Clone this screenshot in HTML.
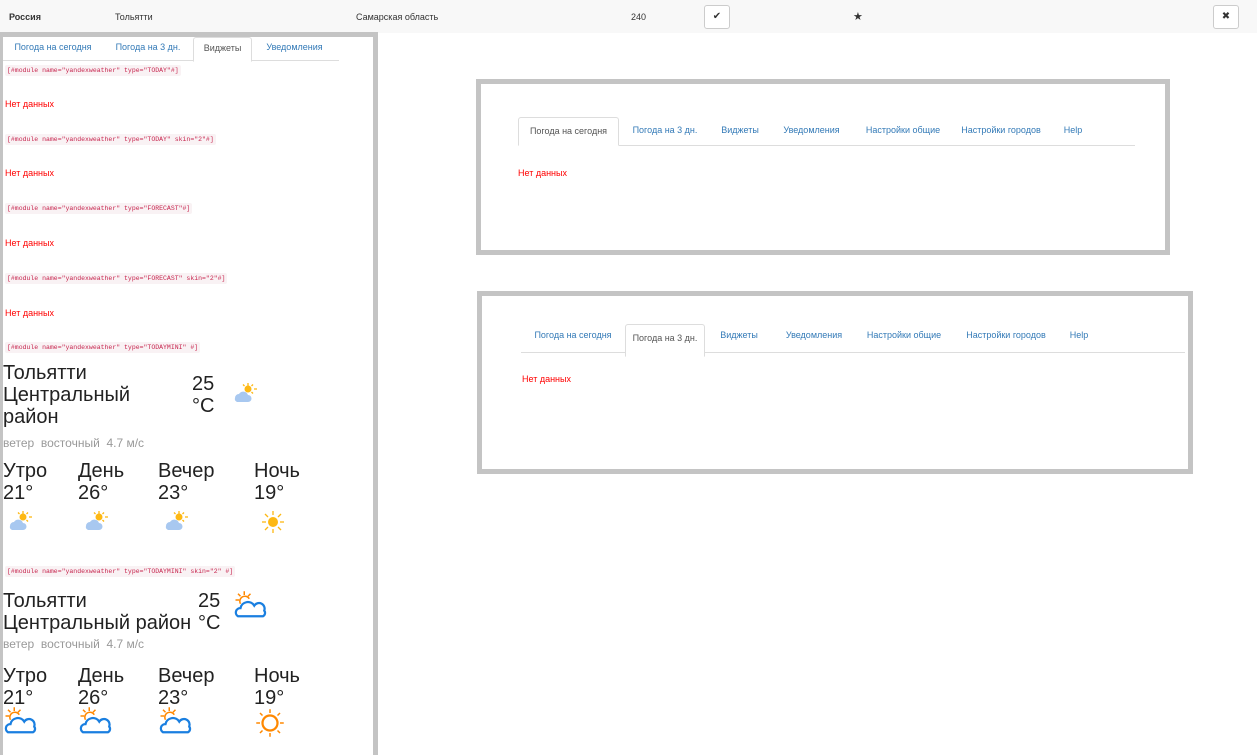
<!DOCTYPE html>
<html><head><meta charset="utf-8"><style>
*{margin:0;padding:0;box-sizing:border-box}
body{width:1257px;height:755px;overflow:hidden;background:#fff;font-family:"Liberation Sans",sans-serif;position:relative;color:#333}
.a{position:absolute;white-space:nowrap}
.top{position:absolute;left:0;top:0;width:1257px;height:33px;background:#f8f8f8;font-size:9px}
.btn{position:absolute;width:26px;height:24px;border:1px solid #ccc;border-radius:3px;background:#fff;font-size:10px;text-align:center;line-height:22px}
.left{position:absolute;left:0;top:32px;width:378px;height:723px;border:5px solid #c4c4c4;border-left-width:3px;border-bottom:0}
.code{position:absolute;left:2px;font-family:"Liberation Mono",monospace;font-size:6.5px;color:#c7254e;background:#f9f2f4;padding:2px 2px;border-radius:2px;white-space:nowrap}
.nd{position:absolute;left:2px;font-size:9px;color:#f00}
.tabs{position:absolute;border-bottom:1px solid #ddd;font-size:9px}
.tab{position:absolute;top:0;color:#337ab7;text-align:center}
.tab.act{color:#555;background:#fff;border:1px solid #ddd;border-bottom-color:#fff;border-radius:3px 3px 0 0}
.box{position:absolute;border:5px solid #c4c4c4;background:#fff}
.big{position:absolute;font-size:20px;color:#222;line-height:22px;white-space:nowrap}
.wind{position:absolute;font-size:12px;color:#999;white-space:nowrap}
</style></head><body>
<div class="top">
<div class="a" style="left:9px;top:12px;font-weight:bold">Россия</div>
<div class="a" style="left:115px;top:12px">Тольятти</div>
<div class="a" style="left:356px;top:12px">Самарская область</div>
<div class="a" style="left:631px;top:12px">240</div>
<div class="btn" style="left:704px;top:5px">✔</div>
<div class="a" style="left:853px;top:10px;font-size:11px">★</div>
<div class="btn" style="left:1213px;top:5px">✖</div>
</div>

<div class="left">
<div class="tabs" style="left:0;top:0;width:336px;height:24px">
<div class="tab" style="left:0;width:100px;height:24px;line-height:21px">Погода на сегодня</div>
<div class="tab" style="left:100px;width:90px;height:24px;line-height:21px">Погода на 3 дн.</div>
<div class="tab act" style="left:190px;width:59px;height:25px;line-height:21px">Виджеты</div>
<div class="tab" style="left:249px;width:85px;height:24px;line-height:21px">Уведомления</div>
</div>
<div class="code" style="top:28px">[#module name="yandexweather" type="TODAY"#]</div>
<div class="nd" style="top:62px">Нет данных</div>
<div class="code" style="top:97px">[#module name="yandexweather" type="TODAY" skin="2"#]</div>
<div class="nd" style="top:131px">Нет данных</div>
<div class="code" style="top:166px">[#module name="yandexweather" type="FORECAST"#]</div>
<div class="nd" style="top:201px">Нет данных</div>
<div class="code" style="top:236px">[#module name="yandexweather" type="FORECAST" skin="2"#]</div>
<div class="nd" style="top:271px">Нет данных</div>
<div class="code" style="top:305px">[#module name="yandexweather" type="TODAYMINI" #]</div>

<div class="big" style="left:0;top:325px">Тольятти<br>Центральный<br>район</div>
<div class="big" style="left:189px;top:336px">25<br>°C</div>
<div class="wind" style="left:0;top:399px">ветер&nbsp; восточный&nbsp; 4.7 м/с</div>
<div class="big" style="left:0;top:423px">Утро<br>21°</div>
<div class="big" style="left:75px;top:423px">День<br>26°</div>
<div class="big" style="left:155px;top:423px">Вечер<br>23°</div>
<div class="big" style="left:251px;top:423px">Ночь<br>19°</div>

<div class="code" style="top:529px">[#module name="yandexweather" type="TODAYMINI" skin="2" #]</div>
<div class="big" style="left:0;top:553px">Тольятти<br>Центральный район</div>
<div class="big" style="left:195px;top:553px">25<br>°C</div>
<div class="wind" style="left:0;top:600px">ветер&nbsp; восточный&nbsp; 4.7 м/с</div>
<div class="big" style="left:0;top:628px">Утро<br>21°</div>
<div class="big" style="left:75px;top:628px">День<br>26°</div>
<div class="big" style="left:155px;top:628px">Вечер<br>23°</div>
<div class="big" style="left:251px;top:628px">Ночь<br>19°</div>
</div>

<svg width="1257" height="755" style="position:absolute;left:0;top:0" >
<defs>
<g id="pc"><g stroke="#fdb813" stroke-width="1.3"><line x1="16" y1="1" x2="16" y2="4"/><line x1="22" y1="7" x2="25" y2="7"/><line x1="21" y1="2.5" x2="19.5" y2="4"/><line x1="21" y1="11.5" x2="19.5" y2="10"/><line x1="11" y1="2.5" x2="12.5" y2="4"/></g><circle cx="16" cy="7" r="3.5" fill="#fdb813"/><path d="M3 16 a4 4 0 0 1 4-4 a5 5 0 0 1 9 1 a3.5 3.5 0 0 1 0 7 h-10 a3 3 0 0 1-3-4z" fill="#a8c8f0"/></g>
<g id="sun"><g stroke="#fdb813" stroke-width="1.3"><line x1="12" y1="1" x2="12" y2="5"/><line x1="12" y1="19" x2="12" y2="23"/><line x1="1" y1="12" x2="5" y2="12"/><line x1="19" y1="12" x2="23" y2="12"/><line x1="4" y1="4" x2="7" y2="7"/><line x1="20" y1="4" x2="17" y2="7"/><line x1="4" y1="20" x2="7" y2="17"/><line x1="20" y1="20" x2="17" y2="17"/></g><circle cx="12" cy="12" r="5" fill="#fdb813"/></g>
<g id="pc2" fill="none"><g stroke="#f80" stroke-width="1.2"><line x1="9" y1="1" x2="9" y2="4"/><line x1="2" y1="8" x2="5" y2="8"/><line x1="4" y1="3" x2="6" y2="5"/><line x1="14" y1="3" x2="12" y2="5"/><path d="M6 11 a4 4 0 0 1 7-4"/></g><path d="M4 21 a3.5 3.5 0 0 1 2-6.5 a6 6 0 0 1 11-2 a4.5 4.5 0 0 1 8 4 a3 3 0 0 1-1 4.5z" stroke="#1a7fe0" stroke-width="1.8"/></g>
<g id="sun2" fill="none" stroke="#f80" stroke-width="1.2"><circle cx="12" cy="12" r="6" stroke-width="1.8"/><line x1="12" y1="1" x2="12" y2="4"/><line x1="12" y1="20" x2="12" y2="23"/><line x1="1" y1="12" x2="4" y2="12"/><line x1="20" y1="12" x2="23" y2="12"/><line x1="4" y1="4" x2="6" y2="6"/><line x1="20" y1="4" x2="18" y2="6"/><line x1="4" y1="20" x2="6" y2="18"/><line x1="20" y1="20" x2="18" y2="18"/></g>
</defs>
<use href="#pc" x="232" y="382"/>
<use href="#pc" x="7" y="510"/>
<use href="#pc" x="83" y="510"/>
<use href="#pc" x="163" y="510"/>
<use href="#sun" x="261" y="510"/>
<use href="#pc2" transform="translate(233,590) scale(1.25)"/>
<use href="#pc2" transform="translate(3,706) scale(1.25)"/>
<use href="#pc2" transform="translate(78,706) scale(1.25)"/>
<use href="#pc2" transform="translate(158,706) scale(1.25)"/>
<use href="#sun2" transform="translate(255,708) scale(1.25)"/>
</svg>

<div class="box" style="left:476px;top:79px;width:694px;height:176px">
<div class="tabs" style="left:37px;top:33px;width:617px;height:29px">
<div class="tab act" style="left:0;width:101px;height:29px;line-height:26px">Погода на сегодня</div>
<div class="tab" style="left:101px;width:92px;line-height:27px">Погода на 3 дн.</div>
<div class="tab" style="left:193px;width:58px;line-height:27px">Виджеты</div>
<div class="tab" style="left:251px;width:85px;line-height:27px">Уведомления</div>
<div class="tab" style="left:336px;width:98px;line-height:27px">Настройки общие</div>
<div class="tab" style="left:434px;width:98px;line-height:27px">Настройки городов</div>
<div class="tab" style="left:532px;width:46px;line-height:27px">Help</div>
</div>
<div class="nd" style="left:37px;top:84px">Нет данных</div>
</div>

<div class="box" style="left:477px;top:291px;width:716px;height:183px">
<div class="tabs" style="left:39px;top:24px;width:664px;height:33px">
<div class="tab" style="left:0;width:104px;line-height:31px">Погода на сегодня</div>
<div class="tab act" style="left:104px;width:80px;height:33px;line-height:27px;top:4px">Погода на 3 дн.</div>
<div class="tab" style="left:184px;width:68px;line-height:31px">Виджеты</div>
<div class="tab" style="left:252px;width:82px;line-height:31px">Уведомления</div>
<div class="tab" style="left:334px;width:98px;line-height:31px">Настройки общие</div>
<div class="tab" style="left:432px;width:106px;line-height:31px">Настройки городов</div>
<div class="tab" style="left:538px;width:40px;line-height:31px">Help</div>
</div>
<div class="nd" style="left:40px;top:78px">Нет данных</div>
</div>
</body></html>
